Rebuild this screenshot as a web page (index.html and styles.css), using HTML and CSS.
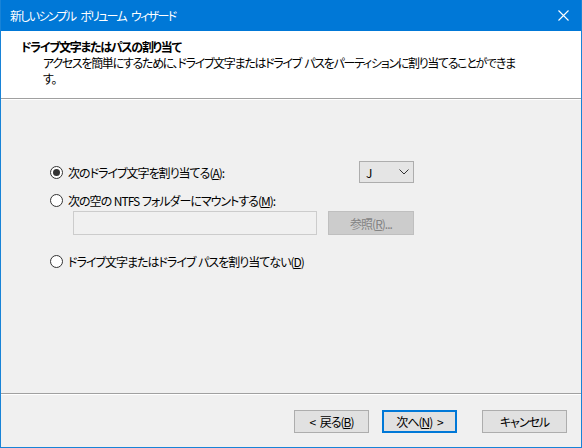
FILE: index.html
```html
<!DOCTYPE html>
<html lang="ja">
<head>
  <meta charset="UTF-8" />
  <title>新しいシンプル ボリューム ウィザード</title>
  <link rel="stylesheet" href="styles.css">
</head>
<body>
  <div class="window">
    <!-- TITLE BAR -->
    <div class="titlebar">
      <span class="title">新しいシンプル ボリューム ウィザード</span>
      <span class="close">
        <svg width="11" height="11" viewBox="0 0 11 11"><path d="M0.5 0.5 L10.5 10.5 M10.5 0.5 L0.5 10.5" stroke="#fff" stroke-width="1.1" fill="none"/></svg>
      </span>
    </div>

    <!-- WIZARD HEADER -->
    <div class="header">
      <div class="header-title">ドライブ文字またはパスの割り当て</div>
      <div class="header-sub">アクセスを簡単にするために、ドライブ文字またはドライブ パスをパーティションに割り当てることができます。</div>
    </div>
    <div class="separator"></div>

    <!-- OPTIONS -->
    <div class="content">
      <div class="options">
        <label class="radio-row">
          <span class="radio checked"></span>
          <span>次のドライブ文字を割り当てる(<u>A</u>):</span>
        </label>
        <div class="combo">
          <span>J</span>
          <svg width="10" height="6" viewBox="0 0 10 6"><path d="M0.5 0.5 L5 5 L9.5 0.5" stroke="#333" stroke-width="1" fill="none"/></svg>
        </div>

        <label class="radio-row wide second">
          <span class="radio"></span>
          <span>次の空の NTFS フォルダーにマウントする(<u>M</u>):</span>
        </label>

        <div class="path-row wide">
          <div class="textbox"></div>
          <button class="btn disabled">参照(<u>R</u>)...</button>
        </div>

        <label class="radio-row wide last">
          <span class="radio"></span>
          <span>ドライブ文字またはドライブ パスを割り当てない(<u>D</u>)</span>
        </label>
      </div>
    </div>
    <div class="separator"></div>

    <!-- FOOTER BUTTONS -->
    <div class="footer">
      <button class="btn">&lt; 戻る(<u>B</u>)</button>
      <button class="btn default">次へ(<u>N</u>) &gt;</button>
      <button class="btn cancel">キャンセル</button>
    </div>
  </div>
</body>
</html>
```

FILE: styles.css
```css
:root {
  --title-blue: #0078d7;
  --face: #f0f0f0;
  --text: #000000;
  --btn-face: #e1e1e1;
  --btn-border: #adadad;
  --font-family: "Noto Sans CJK JP", "Liberation Sans", sans-serif;
}
* {
  margin: 0;
  padding: 0;
  box-sizing: border-box;
}
body {
  width: 582px;
  height: 448px;
  overflow: hidden;
  font-family: var(--font-family);
  font-size: 12px;
  font-feature-settings: "palt";
  letter-spacing: -1px;
  word-spacing: 1px;
  color: var(--text);
  background: var(--face);
}
.window {
  display: flex;
  flex-direction: column;
  width: 582px;
  height: 448px;
  border: 1px solid #1883d7;
  border-top: none;
}

/* Title bar */
.titlebar {
  display: flex;
  align-items: center;
  justify-content: space-between;
  height: 31px;
  padding: 0 12px 0 9px;
  background: var(--title-blue);
  color: #ffffff;
  letter-spacing: -1.7px;
  word-spacing: 4px;
}
.close {
  display: flex;
}

/* Header */
.header {
  height: 67px;
  background: #ffffff;
  padding: 8px 0 0 20px;
  line-height: 16px;
}
.header-title {
  font-weight: bold;
  letter-spacing: -1.3px;
}
.header-sub {
  width: 500px;
  padding-left: 22px;
  letter-spacing: -1.3px;
  word-spacing: 2px;
}
.separator {
  height: 2px;
  border-top: 1px solid #a0a0a0;
  border-bottom: 1px solid #ffffff;
}

/* Options */
.content {
  flex: 1;
  padding: 61px 0 0 49px;
}
.options {
  display: grid;
  grid-template-columns: 1fr auto;
  width: 364px;
}
.wide {
  grid-column: 1 / 3;
}
.radio-row {
  display: flex;
  align-items: center;
  gap: 5px;
  height: 22px;
}
.radio-row.second {
  margin-top: 6px;
}
.radio-row.last {
  margin-top: 15px;
}
.radio {
  width: 13px;
  height: 13px;
  border: 1px solid #333333;
  border-radius: 50%;
  background: #ffffff;
  position: relative;
}
.radio.checked::after {
  content: "";
  position: absolute;
  left: 2px;
  top: 2px;
  width: 7px;
  height: 7px;
  border-radius: 50%;
  background: #333333;
}
.combo {
  display: flex;
  align-items: center;
  justify-content: space-between;
  width: 55px;
  height: 22px;
  padding: 0 4px 0 6px;
  background: #e5e5e5;
  border: 1px solid #adadad;
}
.path-row {
  display: flex;
  justify-content: space-between;
  padding-left: 23px;
}
.textbox {
  width: 244px;
  height: 24px;
  border: 1px solid #cccccc;
  background: var(--face);
}

/* Buttons */
.btn {
  width: 75px;
  height: 23px;
  font-family: var(--font-family);
  font-size: 12px;
  font-feature-settings: "palt";
  letter-spacing: -1px;
  word-spacing: 3px;
  color: var(--text);
  background: var(--btn-face);
  border: 1px solid var(--btn-border);
}
.btn.disabled {
  width: 86px;
  height: 24px;
  background: #cccccc;
  border-color: #bfbfbf;
  color: #838383;
}
.btn.default {
  border: 2px solid var(--title-blue);
}
.footer {
  display: flex;
  align-items: center;
  height: 52px;
  padding-left: 293px;
}
.footer .btn + .btn {
  margin-left: 13px;
}
.footer .btn.cancel {
  margin-left: 25px;
  width: 85px;
}
```
